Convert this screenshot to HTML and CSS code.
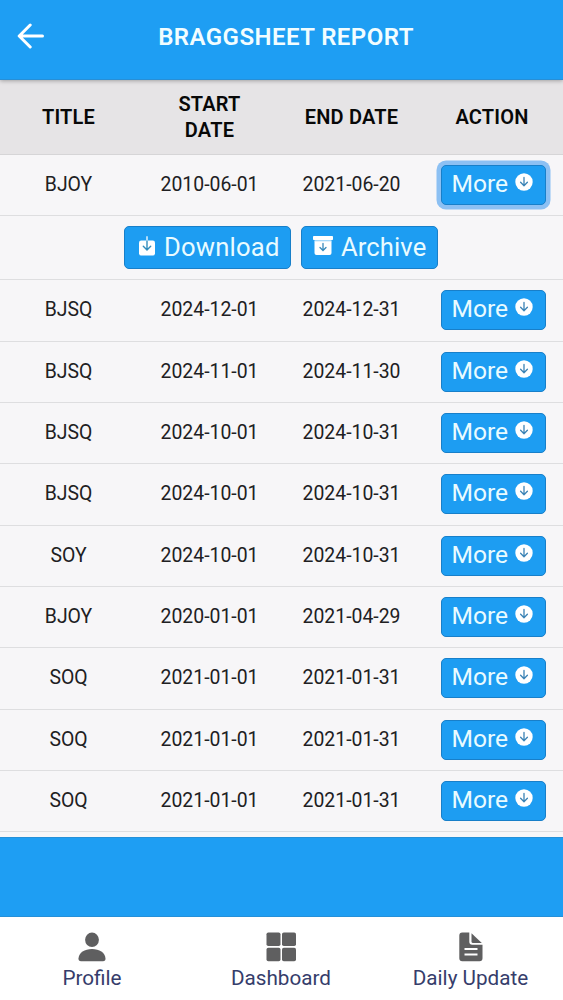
FILE: index.html
```html
<!DOCTYPE html>
<html lang="en">
<head>
<meta charset="utf-8">
<title>Braggsheet Report</title>
<link rel="stylesheet" href="styles.css">
</head>
<body>
<svg class="sprite" aria-hidden="true">
  <symbol id="down" viewBox="0 0 18 18"><circle cx="9" cy="9" r="8.7" fill="#fff"/><path d="M9 4.5v8M5.6 9.3 9 12.7l3.4-3.4" fill="none" stroke="#3b83b5" stroke-width="1.3" stroke-linecap="round" stroke-linejoin="round"/></symbol>
</svg>
<div class="app">
  <header class="topbar">
    <svg class="back" viewBox="0 0 28 26"><path d="M13.2 2 2.2 13l11 11M2.6 13H25.5" fill="none" stroke="#fff" stroke-width="3" stroke-linecap="round" stroke-linejoin="round"/></svg>
    <h1 class="title">BRAGGSHEET REPORT</h1>
  </header>
  <main class="table">
    <div class="row head"><span>TITLE</span><span>START<br>DATE</span><span>END DATE</span><span>ACTION</span></div>
    <div class="row"><span>BJOY</span><span>2010-06-01</span><span>2021-06-20</span><button class="btn more focused">More<svg class="down"><use href="#down"/></svg></button></div>
    <div class="actions">
      <button class="btn download"><svg class="icon-download" viewBox="0 0 18 20"><rect x="1" y="4.5" width="16" height="15" rx="2.2" fill="#fff"/><path d="M9 .3v5" stroke="#fff" stroke-width="1.3"/><path d="M9 5v8.8M5.3 10.3 9 14l3.7-3.7" fill="none" stroke="#328dbd" stroke-width="1.4" stroke-linecap="round"/></svg>Download</button>
      <button class="btn archive"><svg class="icon-archive" viewBox="0 0 20 20"><rect x="0" y="0" width="20" height="4" rx=".8" fill="#fff"/><path d="M1.5 5.2h17V17a2 2 0 0 1-2 2h-13a2 2 0 0 1-2-2z" fill="#fff"/><path d="M1.500 3.800h17v2h-17z" fill="#fff" opacity=".6"/><path d="M10 7.5v6.8M7 11.5l3 3 3-3" fill="none" stroke="#3689bb" stroke-width="1.3" stroke-linecap="round"/></svg>Archive</button>
    </div>
    <div class="row"><span>BJSQ</span><span>2024-12-01</span><span>2024-12-31</span><button class="btn more">More<svg class="down"><use href="#down"/></svg></button></div>
    <div class="row"><span>BJSQ</span><span>2024-11-01</span><span>2024-11-30</span><button class="btn more">More<svg class="down"><use href="#down"/></svg></button></div>
    <div class="row"><span>BJSQ</span><span>2024-10-01</span><span>2024-10-31</span><button class="btn more">More<svg class="down"><use href="#down"/></svg></button></div>
    <div class="row"><span>BJSQ</span><span>2024-10-01</span><span>2024-10-31</span><button class="btn more">More<svg class="down"><use href="#down"/></svg></button></div>
    <div class="row"><span>SOY</span><span>2024-10-01</span><span>2024-10-31</span><button class="btn more">More<svg class="down"><use href="#down"/></svg></button></div>
    <div class="row"><span>BJOY</span><span>2020-01-01</span><span>2021-04-29</span><button class="btn more">More<svg class="down"><use href="#down"/></svg></button></div>
    <div class="row"><span>SOQ</span><span>2021-01-01</span><span>2021-01-31</span><button class="btn more">More<svg class="down"><use href="#down"/></svg></button></div>
    <div class="row"><span>SOQ</span><span>2021-01-01</span><span>2021-01-31</span><button class="btn more">More<svg class="down"><use href="#down"/></svg></button></div>
    <div class="row"><span>SOQ</span><span>2021-01-01</span><span>2021-01-31</span><button class="btn more">More<svg class="down"><use href="#down"/></svg></button></div>
    <div class="row clipped"><i class="btn-edge"></i></div>
  </main>
  <div class="band"></div>
  <nav class="tabs">
    <a class="tab"><svg class="tab-icon" viewBox="0 0 30 30"><ellipse cx="15" cy="7.8" rx="6.9" ry="7.3"/><path d="M1.5 26.5C2 20.500 7.500 17 15 17s13 3.500 13.500 9.500c.1 1.800-.8 2.800-2.500 2.800H4c-1.700 0-2.600-1-2.500-2.800z"/></svg><span>Profile</span></a>
    <a class="tab"><svg class="tab-icon" viewBox="0 0 30 30"><rect x=".5" y=".5" width="14" height="13.500" rx="1.800"/><rect x="16" y=".5" width="14" height="13.500" rx="1.800"/><rect x=".5" y="15.700" width="14" height="13.500" rx="1.800"/><rect x="16" y="15.700" width="14" height="13.500" rx="1.800"/></svg><span>Dashboard</span></a>
    <a class="tab"><svg class="tab-icon" viewBox="0 0 30 30"><path d="M6.300.5h7v9.300a3 3 0 0 0 3 3H26.500v13.500a3 3 0 0 1-3 3H6.300a3 3 0 0 1-3-3V3.500a3 3 0 0 1 3-3zM8.500 16v2H21.500v-2zM8.500 21.500v2H21.500v-2z" fill-rule="evenodd"/><path d="M15.500 1.200 25.800 11H17a1.500 1.500 0 0 1-1.500-1.500z"/></svg><span>Daily Update</span></a>
  </nav>
</div>
</body>
</html>
```
FILE: styles.css
```css
* { box-sizing: border-box; }
body { margin: 0; font-family: Roboto, "Liberation Sans", sans-serif; background: #fff; }
.sprite { display: none; }
.app { display: flex; flex-direction: column; width: 563px; height: 1000px; overflow: hidden; }
.topbar { flex: none; display: grid; grid-template-columns: 50px 1fr 50px; align-items: center; height: 80px; padding-bottom: 6px; background: #1e9ef3; border-bottom: 1px solid #288fd6; z-index: 1; box-shadow: 0 1px 4px rgba(0, 0, 0, .3); }
.back { width: 28px; height: 26px; margin: 0 0 2px 17px; }
.title { grid-column: 2; margin: 0 0 0 9px; text-align: center; color: #f2fdff; font-size: 24px; font-weight: 600; letter-spacing: .45px; line-height: 28px; }
.table { flex: none; height: 757px; overflow: hidden; background: #f7f6f8; color: #202022; }
.row { display: grid; grid-template-columns: 137px 145px 139px 142px; align-items: center; justify-items: center; height: 61.35px; padding-bottom: 2px; border-bottom: 1px solid #dedee0; font-size: 19.4px; line-height: 26px; text-align: center; }
.row > span { margin-top: 2px; }
.row.head { height: 75px; padding-bottom: 2px; padding-top: 0; background: #e6e4e6; border-bottom-color: #d6d5d7; color: #080808; font-size: 20px; font-weight: 600; letter-spacing: .2px; }
.clipped { align-items: start; border: 0; }
.btn-edge { grid-column: 4; width: 105px; height: 2px; margin-top: 4.3px; margin-left: 2px; background: #1d9df2; }
.actions { display: flex; justify-content: center; align-items: center; gap: 10px; height: 63.9px; padding-right: 1px; border-bottom: 1px solid #dedee0; }
.btn { display: flex; align-items: center; padding: 0; border: 1.5px solid #187fc9; border-radius: 5px; background: #1d9df2; color: #e9fbff; font-family: inherit; font-size: 25px; line-height: 30px; white-space: nowrap; }
.more { width: 105px; height: 40px; margin-top: 2px; margin-left: 2px; padding: 0 0 2px 10px; font-size: 24.6px; }
.focused { box-shadow: 0 0 0 4.5px #8cc0f3; }
.down { width: 18px; height: 18px; margin: -4px 0 0 7px; }
.download { width: 167px; height: 43px; padding: 0 0 2px 13px; font-size: 25.6px; letter-spacing: .2px; }
.icon-download { width: 18px; height: 20px; margin: -2px 8px 0 0; }
.archive { width: 137px; height: 43px; padding: 0 0 2px 11px; font-size: 25.6px; letter-spacing: .1px; }
.icon-archive { width: 20px; height: 20px; margin: -1px 8px 0 0; }
.band { flex: none; height: 80px; background: #1e9ef3; border-top: 1px solid #2590d8; border-bottom: 1px solid #2590d8; }
.tabs { flex: 1; display: grid; grid-template-columns: 184px 194px 185px; justify-items: center; background: #fff; }
.tab { display: flex; flex-direction: column; align-items: center; padding-top: 15px; color: #363d6b; font-size: 20.7px; line-height: 28px; }
.tab-icon { width: 30px; height: 30px; margin-bottom: 2px; fill: #5f5f60; }
```
